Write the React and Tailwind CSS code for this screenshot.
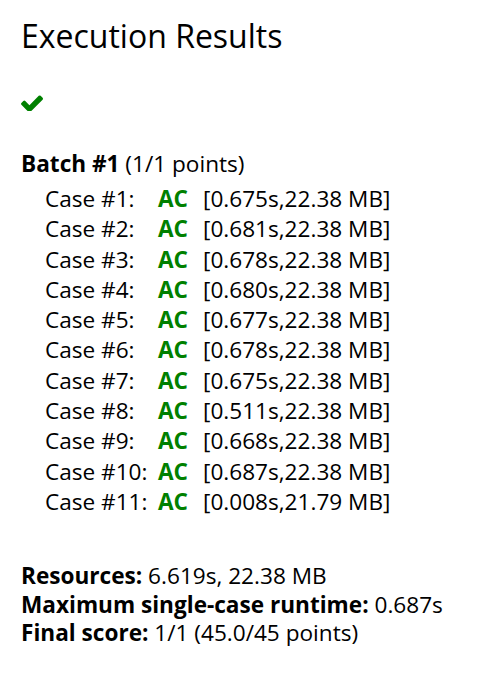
const cases = [
  ["Case #1:", "[0.675s,22.38 MB]"],
  ["Case #2:", "[0.681s,22.38 MB]"],
  ["Case #3:", "[0.678s,22.38 MB]"],
  ["Case #4:", "[0.680s,22.38 MB]"],
  ["Case #5:", "[0.677s,22.38 MB]"],
  ["Case #6:", "[0.678s,22.38 MB]"],
  ["Case #7:", "[0.675s,22.38 MB]"],
  ["Case #8:", "[0.511s,22.38 MB]"],
  ["Case #9:", "[0.668s,22.38 MB]"],
  ["Case #10:", "[0.687s,22.38 MB]"],
  ["Case #11:", "[0.008s,21.79 MB]"],
];

export default function App() {
  return (
    <div className="min-h-[675px] w-[488px] bg-white text-black pl-[21px] pt-[16px] font-['Open_Sans',sans-serif] text-[22.6px]">
      <h2 className="text-[32px] leading-[40px] font-normal whitespace-nowrap">Execution Results</h2>
      <svg
        className="mt-[39px] block"
        width="22"
        height="16"
        viewBox="121 310 1550 1116"
        fill="#008000"
        aria-hidden="true"
      >
        <path d="M1671 566q0 40-28 68l-724 724-136 136q-28 28-68 28t-68-28l-136-136-362-362q-28-28-28-68t28-68l136-136q28-28 68-28t68 28l294 295 656-657q28-28 68-28t68 28l136 136q28 28 28 68z" />
      </svg>
      <div className="mt-[39px] leading-[28px] whitespace-nowrap">
        <span className="font-bold">Batch #1</span> (1/1 points)
      </div>
      <div className="mt-[6px] ml-[24px] flex flex-col">
        {cases.map(([label, info]) => (
          <div key={label} className="flex h-[30.3px] items-center whitespace-nowrap leading-[30.3px]">
            <span className="w-[113px] shrink-0">{label}</span>
            <span className="w-[45px] shrink-0 font-bold text-[#008000]">AC</span>
            <span>{info}</span>
          </div>
        ))}
      </div>
      <div className="mt-[45px] flex flex-col leading-[28.4px] whitespace-nowrap">
        <div>
          <span className="font-bold">Resources:</span> 6.619s, 22.38 MB
        </div>
        <div>
          <span className="font-bold">Maximum single-case runtime:</span> 0.687s
        </div>
        <div>
          <span className="font-bold">Final score:</span> 1/1 (45.0/45 points)
        </div>
      </div>
    </div>
  );
}
